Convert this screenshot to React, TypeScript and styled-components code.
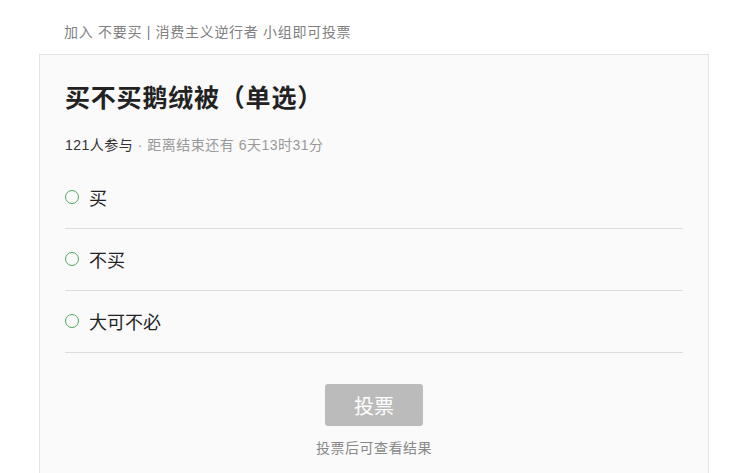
import React from 'react';
import styled, { createGlobalStyle } from 'styled-components';

const GlobalStyle = createGlobalStyle`
  body {
    margin: 0;
    background: #fff;
    font-family: "Liberation Sans", "Noto Sans CJK SC", sans-serif;
  }
`;

const Page = styled.div`
  padding: 0 35px 0 39px;
`;

const GroupHint = styled.div`
  padding: 22px 0 0 25px;
  height: 32px;
  font-size: 14px;
  line-height: 20px;
  letter-spacing: 0.7px;
  color: #808080;
`;

const Card = styled.div`
  box-sizing: border-box;
  width: 670px;
  min-height: 440px;
  border: 1px solid #e3e3e3;
  background: #fafafa;
  padding: 23px 25px 0 25px;
`;

const Title = styled.h1`
  margin: 0;
  font-size: 25px;
  line-height: 40px;
  font-weight: bold;
  letter-spacing: 0.8px;
  color: #222;
`;

const Meta = styled.div`
  margin-top: 17px;
  font-size: 14px;
  line-height: 20px;
  letter-spacing: 0.5px;
  color: #999;
`;

const Count = styled.span`
  color: #333;
`;

const OptionList = styled.ul`
  list-style: none;
  margin: 12px 0 0;
  padding: 0;
`;

const Option = styled.li`
  box-sizing: border-box;
  display: flex;
  align-items: center;
  height: 62px;
  padding-bottom: 2px;
  border-bottom: 1px solid #ddd;
`;

const Radio = styled.span`
  width: 12px;
  height: 12px;
  border: 1px solid #4fa85e;
  border-radius: 50%;
  margin-right: 10px;
  flex: none;
`;

const Label = styled.span`
  font-size: 18px;
  color: #222;
`;

const Footer = styled.div`
  display: flex;
  flex-direction: column;
  align-items: center;
  padding-top: 31px;
`;

const VoteButton = styled.button`
  width: 98px;
  height: 42px;
  border: none;
  border-radius: 3px;
  background: #bbb;
  color: #fff;
  font-family: inherit;
  font-size: 20px;
`;

const Note = styled.div`
  margin-top: 12px;
  font-size: 14px;
  line-height: 20px;
  letter-spacing: 0.5px;
  color: #888;
`;

const options = ['买', '不买', '大可不必'];

export default function App() {
  return (
    <>
      <GlobalStyle />
      <Page>
        <GroupHint>加入 不要买 | 消费主义逆行者 小组即可投票</GroupHint>
        <Card>
          <Title>买不买鹅绒被（单选）</Title>
          <Meta>
            <Count>121人参与</Count> · 距离结束还有 6天13时31分
          </Meta>
          <OptionList>
            {options.map((o) => (
              <Option key={o}>
                <Radio />
                <Label>{o}</Label>
              </Option>
            ))}
          </OptionList>
          <Footer>
            <VoteButton>投票</VoteButton>
            <Note>投票后可查看结果</Note>
          </Footer>
        </Card>
      </Page>
    </>
  );
}
